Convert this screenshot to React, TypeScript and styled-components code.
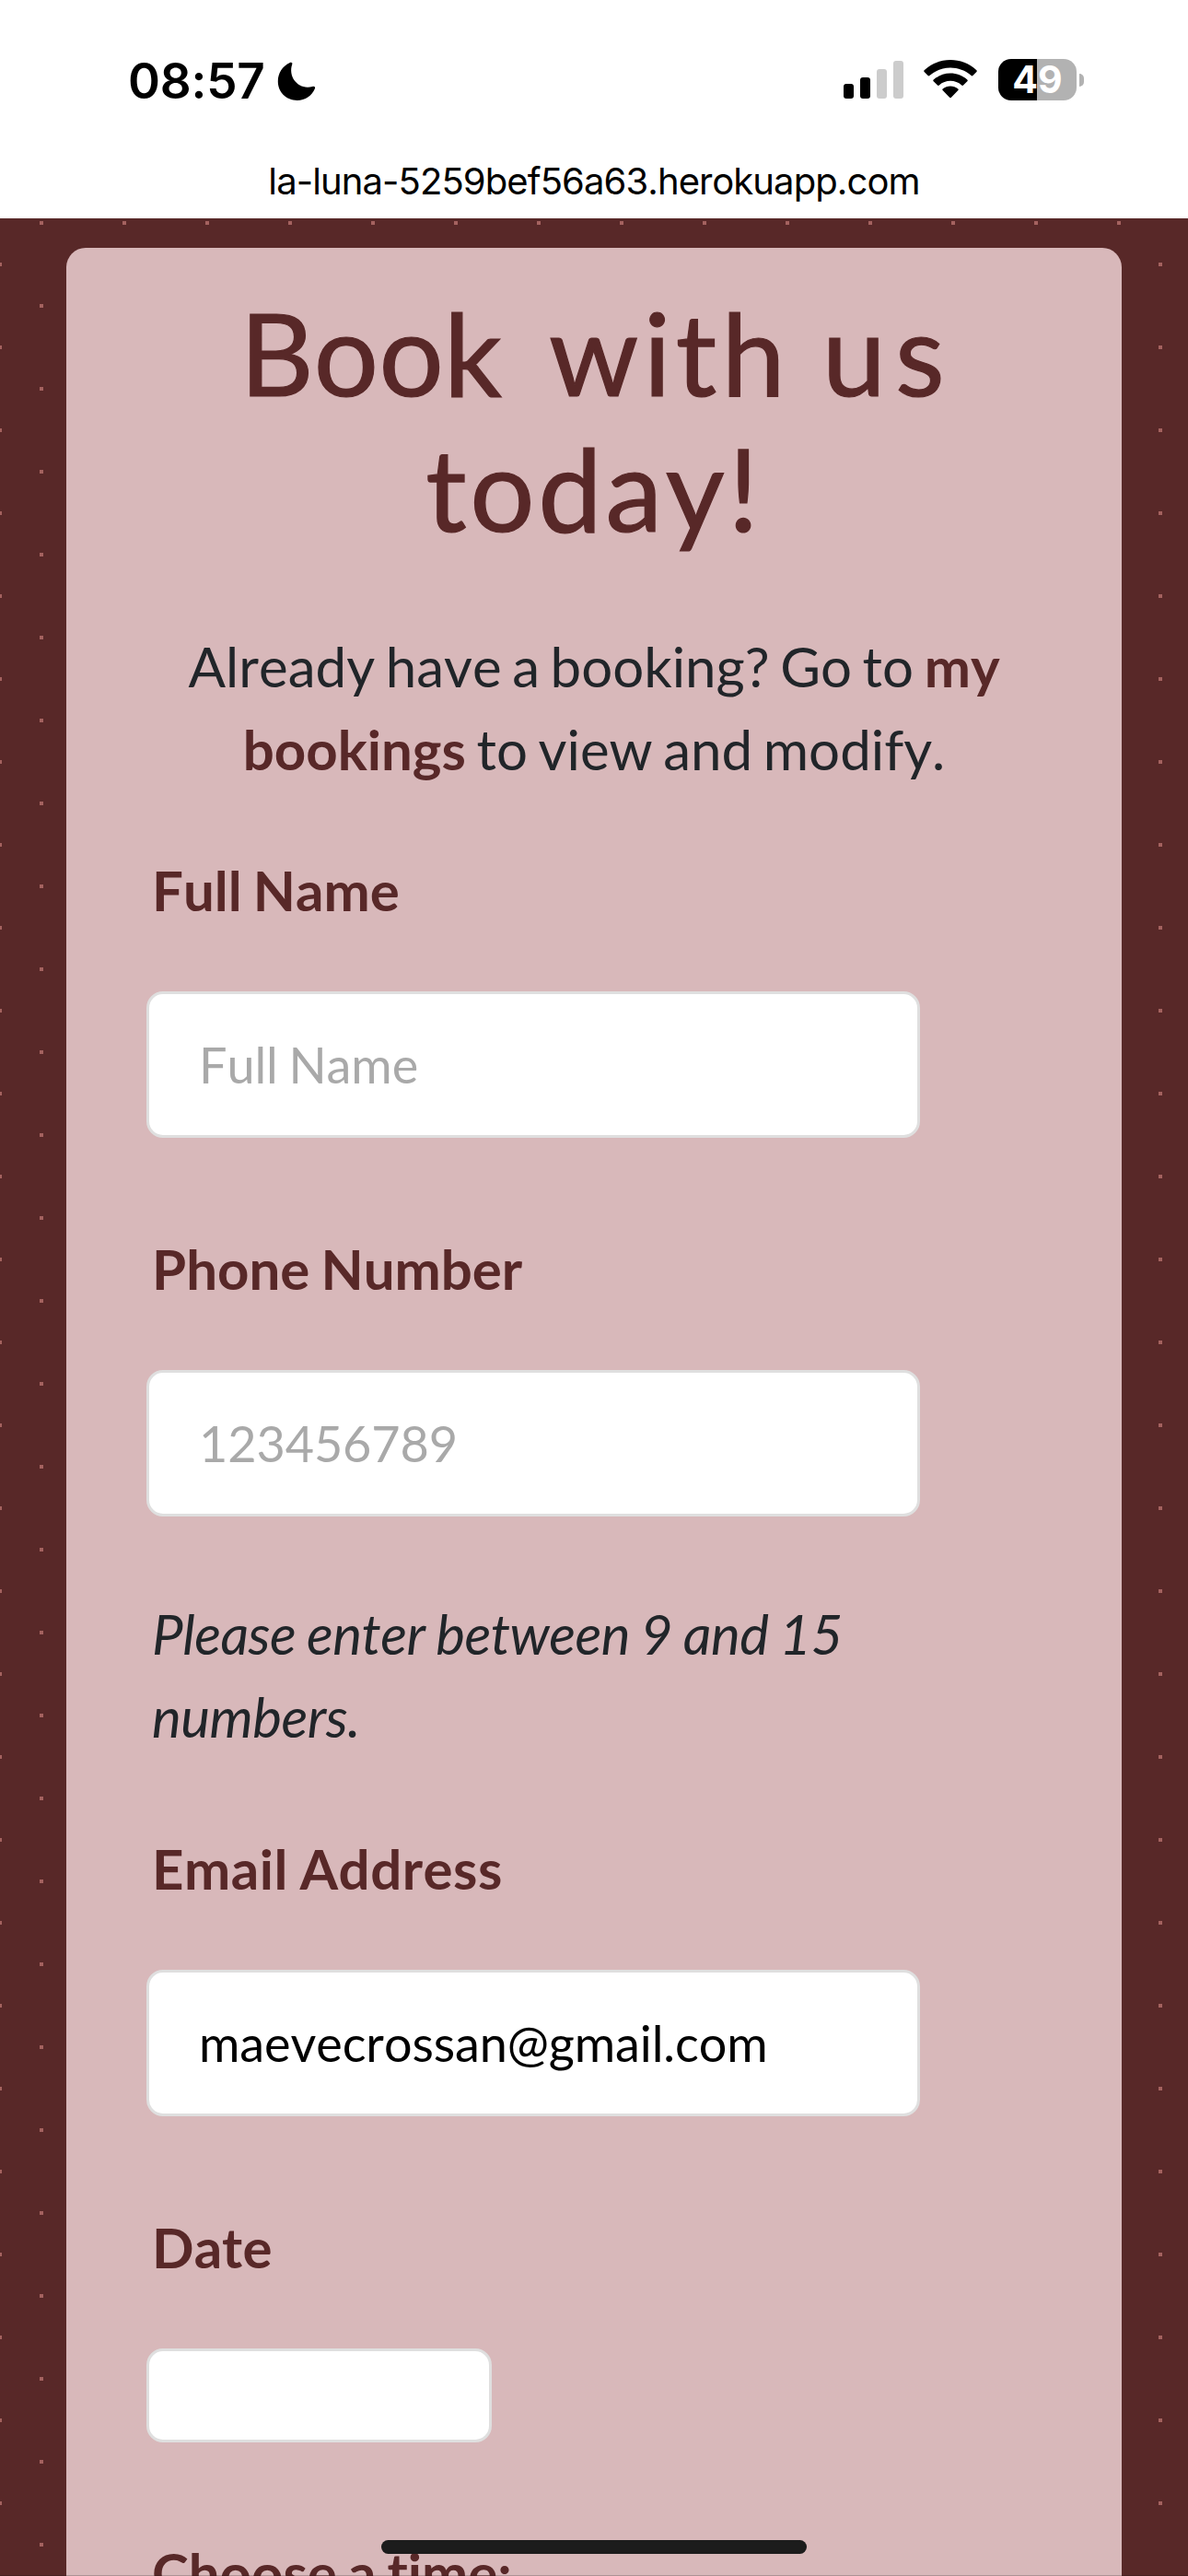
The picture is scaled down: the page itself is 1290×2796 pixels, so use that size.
import React from 'react';
import styled, { createGlobalStyle } from 'styled-components';

const GlobalStyle = createGlobalStyle`
  *, *::before, *::after { box-sizing: border-box; }
  html, body { margin: 0; padding: 0; }
  body { width: 1290px; height: 2796px; overflow: hidden; background: #fff; }
`;

const Screen = styled.div`
  position: relative;
  width: 1290px;
  height: 2796px;
  display: flex;
  flex-direction: column;
  overflow: hidden;
  background: #fff;
  font-family: Lato, sans-serif;
  font-kerning: none;
  font-variant-ligatures: none;
`;

const StatusBar = styled.header`
  height: 160px;
  padding: 13px 113px 0 139px;
  display: flex;
  align-items: center;
  justify-content: space-between;
  font-family: Inter, sans-serif;
  color: #000;
`;

const TimeGroup = styled.div`
  display: flex;
  align-items: center;
  gap: 13px;
  padding-top: 3px;
`;

const IconGroup = styled.div`
  display: flex;
  align-items: center;
  gap: 22px;
`;

const Clock = styled.span`
  font-size: 53px;
  line-height: 60px;
  font-weight: 600;
  letter-spacing: -0.2px;
`;

const Battery = styled.div`
  display: flex;
  align-items: center;
  gap: 3px;
  margin-left: 1px;
`;

const BatteryBody = styled.div`
  width: 85px;
  height: 45px;
  border-radius: 14px;
  background: linear-gradient(90deg, #000 42px, #b2b2b2 42px);
  display: flex;
  align-items: center;
  justify-content: center;
  color: #fff;
  font-size: 41px;
  line-height: 45px;
  font-weight: 700;
`;

const BatteryTip = styled.div`
  width: 5px;
  height: 14px;
  border-radius: 0 7px 7px 0;
  background: #b2b2b2;
`;

const AddressBar = styled.div`
  height: 77px;
  display: flex;
  justify-content: center;
  padding-top: 12px;
  font-family: Inter, sans-serif;
  font-size: 40px;
  line-height: 50px;
  letter-spacing: -0.9px;
  color: #000;
`;

const Page = styled.main`
  flex: 1;
  min-height: 0;
  padding: 32px 72px 0;
  background-color: #582828;
  background-image:
    conic-gradient(from 270deg at 4px 4px, #a4625f 90deg, transparent 0),
    conic-gradient(from 270deg at 4px 4px, #a4625f 90deg, transparent 0);
  background-size: 90px 90px;
  background-position: 43px 3px, -2px 48px;
  overflow: hidden;
`;

const Card = styled.section`
  height: 2700px;
  padding: 40px 87px 0;
  border-radius: 21px;
  background: #d8b8ba;
  color: #212529;
  font-size: 60px;
  line-height: 90px;
`;

const Title = styled.h1`
  margin: 0;
  padding-right: 4px;
  font-size: 124px;
  line-height: 147px;
  font-weight: 400;
  color: #582828;
  -webkit-text-stroke: 1.2px #582828;
`;

const TitleLine = styled.span`
  display: flex;
  justify-content: center;
`;

const Word = styled.span<{ $spacing: number; $before?: number }>`
  letter-spacing: ${p => p.$spacing}px;
  margin-right: ${p => -p.$spacing}px;
  margin-left: ${p => p.$before ?? 0}px;
`;

const Intro = styled.p`
  margin: 75px 0 0;
  text-align: center;
  white-space: nowrap;
  word-spacing: -3.8px;
`;

const BookingsLink = styled.a`
  color: #582828;
  font-weight: 700;
`;

const Field = styled.div<{ $top: number }>`
  margin-top: ${p => p.$top}px;
  display: flex;
  flex-direction: column;
  align-items: flex-start;
`;

const Label = styled.label<{ $spacing?: number }>`
  padding-left: 6px;
  font-weight: 700;
  word-spacing: -2.5px;
  letter-spacing: ${p => p.$spacing ?? 0}px;
  color: #582828;
`;

const Input = styled.input<{ $small?: boolean }>`
  appearance: none;
  width: ${p => (p.$small ? 375 : 840)}px;
  height: ${p => (p.$small ? 102 : 159)}px;
  margin: 65px 0 0;
  padding: 0 54px;
  border: 3px solid #dfdfdf;
  border-radius: 18px;
  background: #fff;
  color: #000;
  font-family: Lato, sans-serif;
  font-size: 54px;
  font-kerning: none;
  letter-spacing: -0.1px;
  word-spacing: -2px;
  outline: none;
  &::placeholder { color: #a9a9a9; opacity: 1; }
`;

const Hint = styled.p`
  margin: 82px 0 0;
  padding-left: 6px;
  font-style: italic;
  letter-spacing: -0.5px;
  word-spacing: -1.8px;
`;

const HomeIndicator = styled.div`
  position: absolute;
  left: 414px;
  bottom: 24px;
  width: 462px;
  height: 15px;
  border-radius: 8px;
  background: #1c1c1c;
`;

const BottomEdge = styled.div`
  position: absolute;
  inset: auto 0 0 0;
  height: 1px;
  background: rgba(0, 0, 0, 0.2);
`;

const Moon = () => (
  <svg width="42" height="42" viewBox="0 0 42 42">
    <path d="M13.4 1.2C15.3 .1 17 1.1 16.2 3C11.5 17 23.5 31 38.2 26.9C40.5 26.3 41.7 27.4 40.9 29.3C37.6 37 30.3 42 21.8 42C9.8 42 .8 33 .8 21.3C.8 12.2 5.7 4.8 13.4 1.2Z" fill="#000" />
  </svg>
);

const Signal = () => (
  <svg width="65" height="41" viewBox="0 0 65 41">
    <rect x="0" y="25" width="11" height="16" rx="3" />
    <rect x="18" y="18" width="11" height="23" rx="3" />
    <rect x="36" y="9" width="11" height="32" rx="3" fill="#ccc" />
    <rect x="54" y="0" width="11" height="41" rx="3" fill="#ccc" />
  </svg>
);

const Wifi = () => (
  <svg width="58" height="43" viewBox="0 0 58 43">
    <path d="M.6 11.2C16.6-3.6 41.4-3.6 57.4 11.2Q58.2 12 57.4 12.9L53.4 17Q52.5 17.9 51.6 17C39 5.6 19 5.6 6.4 17Q5.5 17.9 4.6 17L.6 12.9Q-.2 12 .6 11.2Z" />
    <path d="M10.7 21.5C21 12.2 37 12.2 47.3 21.5Q48.2 22.4 47.3 23.3L43 27.5Q42.1 28.4 41.2 27.5C34.3 21.3 23.7 21.3 16.8 27.5Q15.9 28.4 15 27.5L10.7 23.3Q9.800 22.4 10.7 21.5Z" />
    <path d="M20.6 31.4C25.4 27.4 32.6 27.4 37.4 31.4Q38.2 32.2 37.4 33L29.900 40.8Q29 41.7 28.1 40.8L20.6 33Q19.8 32.2 20.6 31.4Z" />
  </svg>
);

export default function App() {
  return (
    <Screen>
      <GlobalStyle />
      <StatusBar>
        <TimeGroup>
          <Clock>08:57</Clock>
          <Moon />
        </TimeGroup>
        <IconGroup>
          <Signal />
          <Wifi />
          <Battery>
            <BatteryBody>49</BatteryBody>
            <BatteryTip />
          </Battery>
        </IconGroup>
      </StatusBar>
      <AddressBar>la-luna-5259bef56a63.herokuapp.com</AddressBar>
      <Page>
        <Card>
          <Title>
            <TitleLine>
              <Word $spacing={0.3}>Book</Word>
              <Word $spacing={5.3} $before={51}>with</Word>
              <Word $spacing={10} $before={40}>us</Word>
            </TitleLine>
            <TitleLine>
              <Word $spacing={3.7}>today!</Word>
            </TitleLine>
          </Title>
          <Intro>
            Already have a booking? Go to <BookingsLink>my<br />bookings</BookingsLink> to view and modify.
          </Intro>
          <Field $top={63}>
            <Label>Full Name</Label>
            <Input placeholder="Full Name" />
          </Field>
          <Field $top={97}>
            <Label>Phone Number</Label>
            <Input placeholder="123456789" />
          </Field>
          <Hint>Please enter between 9 and 15<br />numbers.</Hint>
          <Field $top={75}>
            <Label $spacing={0.5}>Email Address</Label>
            <Input defaultValue="maevecrossan@gmail.com" />
          </Field>
          <Field $top={97}>
            <Label>Date</Label>
            <Input $small />
          </Field>
          <Field $top={96}>
            <Label>Choose a time:</Label>
          </Field>
        </Card>
      </Page>
      <HomeIndicator />
      <BottomEdge />
    </Screen>
  );
}
